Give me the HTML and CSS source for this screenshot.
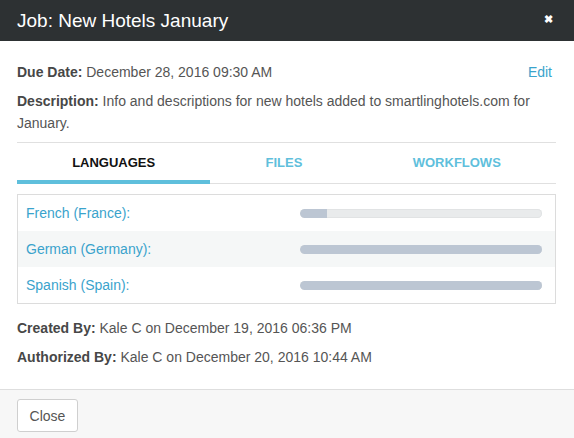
FILE: index.html
```html
<!DOCTYPE html>
<html>
<head>
<meta charset="utf-8">
<link rel="stylesheet" href="styles.css">
</head>
<body>
<div class="modal">
  <div class="modal-header">
    <h1 class="modal-title">Job: New Hotels January</h1>
    <span class="modal-close">&#10006;</span>
  </div>
  <div class="modal-body">
    <div class="meta-row">
      <p class="meta"><b>Due Date:</b> December 28, 2016 09:30 AM</p>
      <a class="edit-link">Edit</a>
    </div>
    <p class="meta desc"><b>Description:</b> Info and descriptions for new hotels added to smartlinghotels.com for January.</p>
    <div class="tabs">
      <div class="tab active">Languages</div>
      <div class="tab">Files</div>
      <div class="tab">Workflows</div>
    </div>
    <div class="lang-table">
      <div class="lang-row">
        <span class="lang-name">French (France):</span>
        <div class="progress"><div class="progress-fill" style="width:11%"></div></div>
      </div>
      <div class="lang-row alt">
        <span class="lang-name">German (Germany):</span>
        <div class="progress"><div class="progress-fill" style="width:100%"></div></div>
      </div>
      <div class="lang-row">
        <span class="lang-name">Spanish (Spain):</span>
        <div class="progress"><div class="progress-fill" style="width:100%"></div></div>
      </div>
    </div>
    <p class="meta created"><b>Created By:</b> Kale C on December 19, 2016 06:36 PM</p>
    <p class="meta authorized"><b>Authorized By:</b> Kale C on December 20, 2016 10:44 AM</p>
  </div>
  <div class="modal-footer">
    <button class="btn">Close</button>
  </div>
</div>
</body>
</html>
```
FILE: styles.css
```css
html, body {
  margin: 0;
  padding: 0;
  background: #fff;
}
body {
  font-family: "Liberation Sans", Arial, sans-serif;
  font-size: 14px;
  color: #555;
}
.modal {
  width: 574px;
  height: 438px;
  display: flex;
  flex-direction: column;
}
.modal-header {
  height: 41px;
  background: #2d3133;
  display: flex;
  align-items: center;
  justify-content: space-between;
  padding: 0 21px 0 17px;
  flex-shrink: 0;
}
.modal-title {
  margin: 0;
  font-size: 19px;
  font-weight: normal;
  color: #fff;
  line-height: 22px;
}
.modal-close {
  color: #fff;
  font-size: 11px;
  font-weight: bold;
  line-height: 11px;
  margin-top: -3px;
}
.modal-body {
  padding: 20px 18px 19px 17px;
  flex: 1;
}
.meta {
  margin: 0;
  line-height: 22px;
}
.meta b {
  color: #474747;
}
.meta-row {
  display: flex;
  justify-content: space-between;
  align-items: center;
}
.edit-link {
  color: #3aa3cc;
  margin-right: 4px;
  cursor: pointer;
}
.desc {
  margin-top: 7px;
}
.tabs {
  margin-top: 8px;
  display: flex;
  border-top: 1px solid #e0e0e0;
  border-bottom: 1px solid #e0e0e0;
}
.tab {
  flex: 1 1 auto;
  text-align: center;
  text-transform: uppercase;
  font-weight: bold;
  font-size: 13px;
  color: #5fbfdc;
  line-height: 22px;
  padding: 9px 0 6px;
  border-bottom: 4px solid transparent;
  margin-bottom: -1px;
}
.tab.active {
  color: #111;
  border-bottom-color: #5fbfdc;
}
.lang-table {
  margin-top: 10px;
  border: 1px solid #dcdcdc;
}
.lang-row {
  height: 36px;
  display: flex;
  align-items: center;
  padding: 0 13px 0 8px;
}
.lang-row.alt {
  background: #f5f7f7;
}
.lang-name {
  flex: 1;
  color: #3aa3cc;
}
.progress {
  width: 242px;
  height: 9px;
  border-radius: 5px;
  background: #e9ebec;
  box-shadow: inset 0 0 0 1px #e1e3e4;
  overflow: hidden;
}
.progress-fill {
  height: 100%;
  background: #bcc6d3;
  border-radius: 5px 0 0 5px;
}
.created {
  margin-top: 13px;
}
.authorized {
  margin-top: 7px;
}
.modal-footer {
  border-top: 1px solid #dedede;
  background: #f7f7f7;
  padding: 9px 17px 0;
  height: 49px;
  box-sizing: border-box;
  flex-shrink: 0;
}
.btn {
  font-family: "Liberation Sans", Arial, sans-serif;
  font-size: 14px;
  color: #555;
  background: #fff;
  border: 1px solid #cfcfcf;
  border-radius: 3px;
  height: 33px;
  width: 61px;
  padding: 0;
}
```
